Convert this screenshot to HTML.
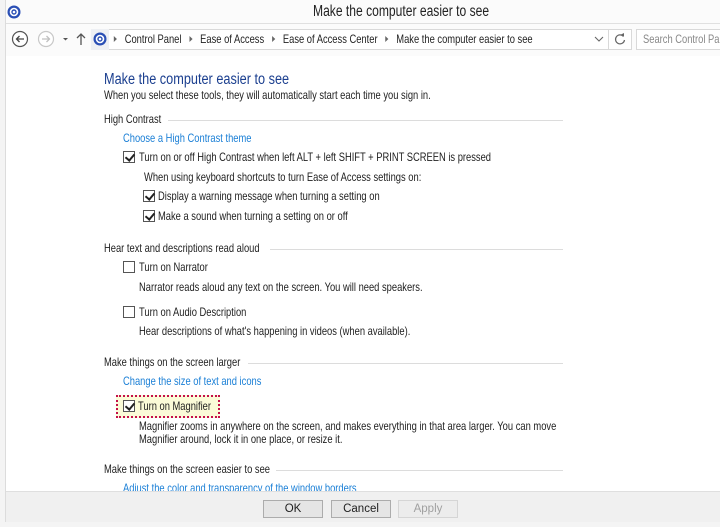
<!DOCTYPE html>
<html><head><style>
*{margin:0;padding:0;box-sizing:border-box}
body{width:720px;height:527px;overflow:hidden;background:#fff;font-family:"Liberation Sans",sans-serif;font-size:12px;color:#1e1e1e;position:relative}
.a{position:absolute;white-space:nowrap}
.t{transform:scaleX(.78);transform-origin:0 0}
.link{color:#1a7fd6}
.cb{position:absolute;width:12px;height:12px;border:1px solid #555;background:#fff}
.cb.on::after{content:"";position:absolute;left:3px;top:0px;width:4px;height:7px;border:solid #222;border-width:0 2px 2px 0;transform:rotate(40deg)}
.hl{position:absolute;height:1px;background:#dcdcdc}
.btn{position:absolute;top:500px;width:60px;height:18px;border:1px solid #acacac;background:#e5e5e5;text-align:center;line-height:16px;font-size:11.5px}
.crumb{color:#222}
.tri{display:inline-block;width:0;height:0;border-left:4px solid #666;border-top:3px solid transparent;border-bottom:3px solid transparent;margin:0 10px 1px 10px}
</style></head><body>
<div class="a" style="left:0;top:0;width:720px;height:56px;background:#fbfbfb"></div>
<div class="a" style="left:0;top:0;width:6px;height:527px;background:#f4f4f4;border-right:1px solid #dcdcdc"></div>
<div class="a" style="left:0;top:522px;width:720px;height:5px;background:#f4f4f4"></div>
<div class="a" style="left:6px;top:23px;width:714px;height:1px;background:#e0e0e0"></div>
<svg class="a" style="left:7px;top:5px" width="14" height="14"><circle cx="7" cy="7" r="6.5" fill="#2a4fb5"/><circle cx="7" cy="7" r="3.5" fill="none" stroke="#fff" stroke-width="1.6"/><circle cx="7" cy="7" r="1.3" fill="#fff"/></svg>
<div class="a t" style="left:313px;top:3px;font-size:15.5px;color:#222">Make the computer easier to see</div>
<svg class="a" style="left:11px;top:30px" width="60" height="18">
<circle cx="9" cy="9" r="7.5" fill="#fff" stroke="#555" stroke-width="1.2"/><path d="M13 9H5.5M8.5 6L5.5 9L8.5 12" fill="none" stroke="#444" stroke-width="1.3"/>
<circle cx="35" cy="9" r="7.5" fill="#fff" stroke="#c8c8c8" stroke-width="1.2"/><path d="M31 9H38.5M35.5 6L38.5 9L35.5 12" fill="none" stroke="#c0c0c0" stroke-width="1.3"/>
<path d="M52 8l2.5 2.5L57 8z" fill="#555"/></svg>
<svg class="a" style="left:74px;top:31px" width="14" height="16"><path d="M7 14V3M3 7L7 3L11 7" fill="none" stroke="#555" stroke-width="1.3"/></svg>
<div class="a" style="left:91px;top:29px;width:518px;height:21px;border:1px solid #d9d9d9;background:#fff"></div>
<div class="a" style="left:91px;top:29px;width:18px;height:21px;background:#eef0f4"></div>
<svg class="a" style="left:93px;top:32px" width="14" height="14"><circle cx="7" cy="7" r="6.5" fill="#2a4fb5"/><circle cx="7" cy="7" r="3.5" fill="none" stroke="#fff" stroke-width="1.6"/><circle cx="7" cy="7" r="1.3" fill="#fff"/></svg>
<div class="a crumb t" style="left:106px;top:32px"><span class="tri"></span>Control Panel<span class="tri"></span>Ease of Access<span class="tri"></span>Ease of Access Center<span class="tri"></span>Make the computer easier to see</div>
<svg class="a" style="left:594px;top:34px" width="10" height="10"><path d="M1 3l4 4 4-4" fill="none" stroke="#666" stroke-width="1.1"/></svg>
<div class="a" style="left:608px;top:29px;width:24px;height:21px;border:1px solid #d9d9d9;background:#fff"></div>
<svg class="a" style="left:613px;top:32px" width="14" height="14"><path d="M10.5 4.5A4.5 4.5 0 1 0 11.5 8" fill="none" stroke="#666" stroke-width="1.2"/><path d="M8 2.5L11 4.5L11 1z" fill="#666"/></svg>
<div class="a" style="left:636px;top:29px;width:90px;height:21px;border:1px solid #d9d9d9;background:#fff"></div>
<div class="a t" style="left:643px;top:32px;color:#888">Search Control Pa</div>

<div class="a t" style="left:104px;top:71px;font-size:15.5px;color:#1b3f8f;transform:scaleX(.82)">Make the computer easier to see</div>
<div class="a t" style="left:104px;top:88px">When you select these tools, they will automatically start each time you sign in.</div>

<div class="a t" style="left:104px;top:112px">High Contrast</div><div class="hl" style="left:168px;top:120px;width:395px"></div>
<div class="a link t" style="left:123px;top:131px">Choose a High Contrast theme</div>
<div class="cb on" style="left:123px;top:151px"></div><div class="a t" style="left:139px;top:150px">Turn on or off High Contrast when left ALT + left SHIFT + PRINT SCREEN is pressed</div>
<div class="a t" style="left:144px;top:170px">When using keyboard shortcuts to turn Ease of Access settings on:</div>
<div class="cb on" style="left:143px;top:190px"></div><div class="a t" style="left:158px;top:189px">Display a warning message when turning a setting on</div>
<div class="cb on" style="left:143px;top:210px"></div><div class="a t" style="left:158px;top:209px">Make a sound when turning a setting on or off</div>

<div class="a t" style="left:104px;top:241px">Hear text and descriptions read aloud</div><div class="hl" style="left:270px;top:249px;width:293px"></div>
<div class="cb" style="left:123px;top:261px"></div><div class="a t" style="left:139px;top:260px">Turn on Narrator</div>
<div class="a t" style="left:139px;top:280px">Narrator reads aloud any text on the screen. You will need speakers.</div>
<div class="cb" style="left:123px;top:306px"></div><div class="a t" style="left:139px;top:305px">Turn on Audio Description</div>
<div class="a t" style="left:139px;top:324px">Hear descriptions of what's happening in videos (when available).</div>

<div class="a t" style="left:104px;top:355px">Make things on the screen larger</div><div class="hl" style="left:248px;top:363px;width:315px"></div>
<div class="a link t" style="left:123px;top:374px">Change the size of text and icons</div>
<div class="a" style="left:116px;top:395px;width:104px;height:23px;border:2px dotted #c4104a;background:#fbfbd8"></div>
<div class="cb on" style="left:123px;top:400px"></div><div class="a t" style="left:138px;top:399px">Turn on Magnifier</div>
<div class="a t" style="left:139px;top:419px">Magnifier zooms in anywhere on the screen, and makes everything in that area larger. You can move</div>
<div class="a t" style="left:139px;top:432px">Magnifier around, lock it in one place, or resize it.</div>

<div class="a t" style="left:104px;top:462px">Make things on the screen easier to see</div><div class="hl" style="left:276px;top:470px;width:287px"></div>
<div class="a link t" style="left:123px;top:481px">Adjust the color and transparency of the window borders</div>
<div class="a" style="left:6px;top:491px;width:714px;height:31px;background:#f0f0f0;border-top:1px solid #dfdfdf"></div>
<div class="btn" style="left:263px">OK</div>
<div class="btn" style="left:331px">Cancel</div>
<div class="btn" style="left:398px;color:#a0a0a0;border-color:#d5d5d5;background:#ececec">Apply</div>
</body></html>
